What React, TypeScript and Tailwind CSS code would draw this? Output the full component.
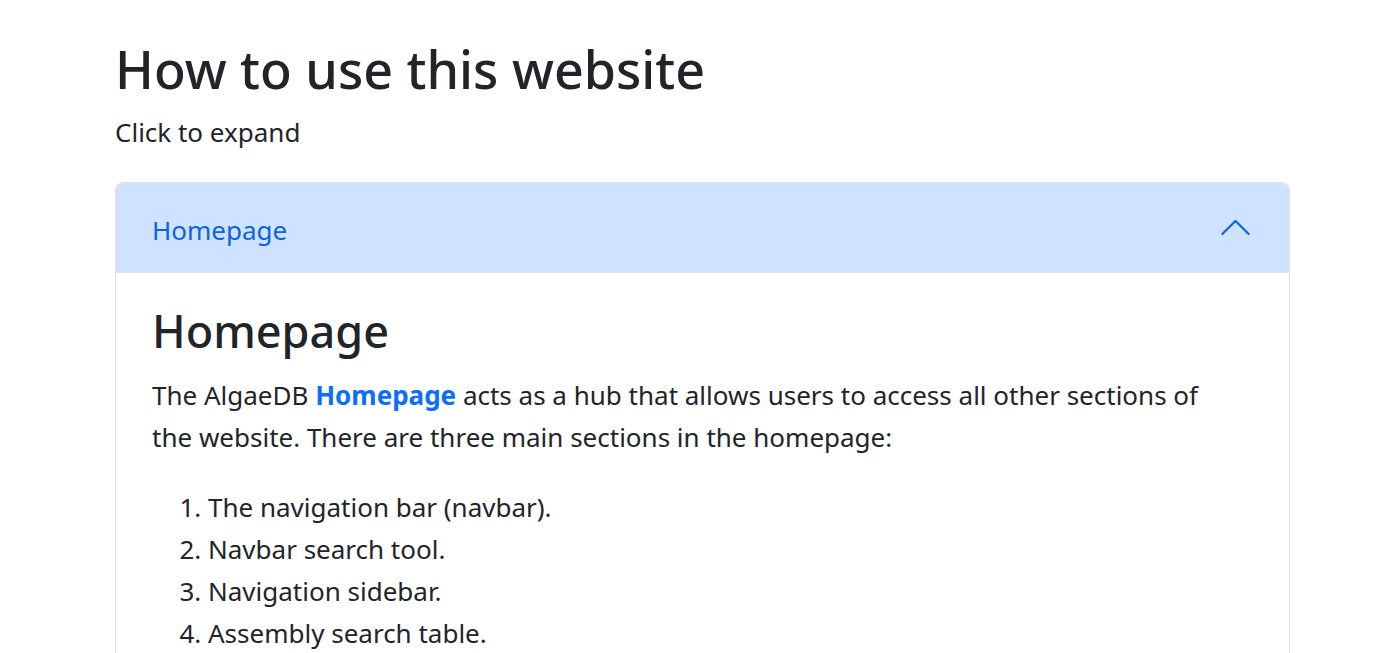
export default function App() {
  const font = { fontFamily: '"Noto Sans", "Open Sans", sans-serif' };
  return (
    <div className="min-h-screen bg-white text-[#212529]" style={font}>
      <div className="ml-[115px] w-[1175px] pt-[38px]">
        <h1 className="text-[52px] font-medium leading-[1.2]">How to use this website</h1>
        <p className="mt-[13px] text-[26px] leading-[1.5]">Click to expand</p>

        <div className="mt-[30px] overflow-hidden rounded-t-[8px] border border-[#dee2e6]">
          <button
            type="button"
            className="flex h-[90px] w-full items-center justify-between border-b border-[#dee2e6] bg-[#cfe2ff] px-[36px] text-left text-[26px] text-[#0c63e4]"
          >
            <span className="pt-[5px]">Homepage</span>
            <svg width="35" height="35" viewBox="0 0 16 16" fill="#0c63e4" className="rotate-180">
              <path d="M1.646 4.646a.5.5 0 0 1 .708 0L8 10.293l5.646-5.647a.5.5 0 0 1 .708.708l-6 6a.5.5 0 0 1-.708 0l-6-6a.5.5 0 0 1 0-.708z" />
            </svg>
          </button>
          <div className="px-[36px] pt-[31px] pb-8">
            <h2 className="text-[45px] font-medium leading-[1.2]">Homepage</h2>
            <p className="mt-[16px] max-w-[1075px] text-[26px] leading-[42px]">
              The AlgaeDB <a className="font-bold text-[#0d6efd]">Homepage</a> acts as a hub that allows users to access all other sections of
              the website. There are three main sections in the homepage:
            </p>
            <ol className="mt-[28px] list-decimal pl-[56px] text-[26px] leading-[42px]">
              <li>The navigation bar (navbar).</li>
              <li>Navbar search tool.</li>
              <li>Navigation sidebar.</li>
              <li>Assembly search table.</li>
            </ol>
          </div>
        </div>
      </div>
    </div>
  );
}
